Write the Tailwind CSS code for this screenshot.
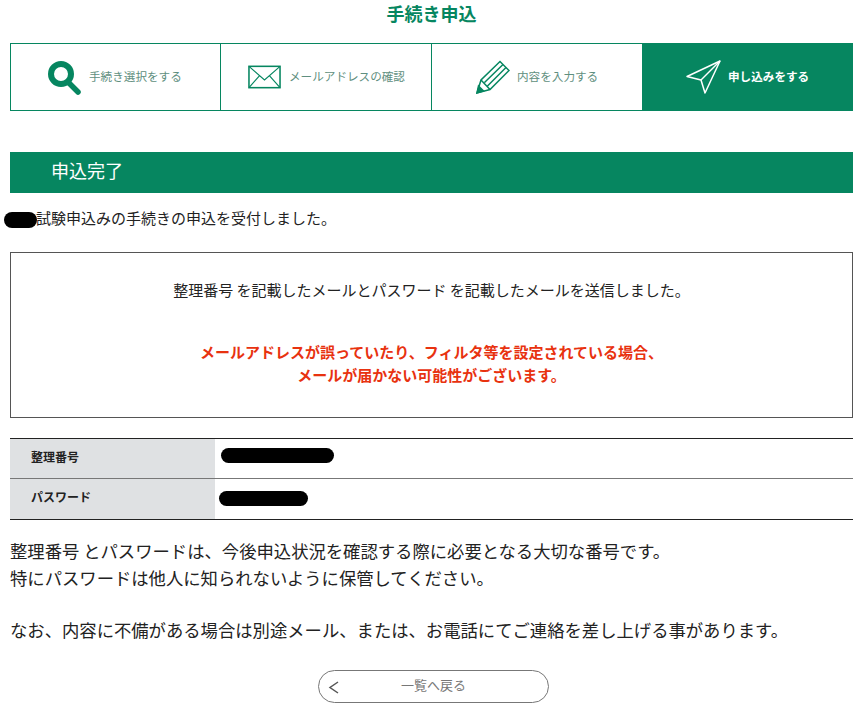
<!DOCTYPE html>
<html lang="ja">
<head>
  <meta charset="UTF-8" />
  <title>手続き申込</title>
  <script src="https://cdn.jsdelivr.net/npm/@tailwindcss/browser@4"></script>
</head>
<body class="bg-white font-['Noto_Sans_CJK_JP',sans-serif] text-[#222] overflow-hidden">
  <div class="w-[858px] h-[710px] pl-[10px] pr-[5px]">
    <h1 class="h-[43px] text-center text-[18px] leading-[26px] font-bold text-[#068660]">手続き申込</h1>

    <!-- steps -->
    <ol class="flex h-[68px] border border-[#068660]">
      <li class="w-[210px] flex items-center border-r border-[#068660] pl-[36px]">
        <svg class="w-[35px] h-[35px] mr-[7px]" viewBox="0 0 35 35" fill="none" stroke="#068660">
          <circle cx="14" cy="14" r="10" stroke-width="6"/>
          <path d="M22 23 L31 32" stroke-width="5.5" stroke-linecap="round"/>
        </svg>
        <span class="text-[11.6px] text-[#5f8f80]">手続き選択をする</span>
      </li>
      <li class="w-[211px] flex items-center border-r border-[#068660] pl-[27px]">
        <svg class="w-[33px] h-[24px] mr-[8px]" viewBox="0 0 34 24" fill="none" stroke="#068660">
          <rect x="1" y="1" width="32" height="22" stroke-width="1.6"/>
          <path d="M1 1 L17 15 L33 1 M1 23 L12 10.5 M33 23 L22 10.5" stroke-width="1.2"/>
        </svg>
        <span class="text-[11.6px] text-[#5f8f80]">メールアドレスの確認</span>
      </li>
      <li class="w-[210px] flex items-center pl-[43px]">
        <svg class="w-[35px] h-[35px] mr-[7px]" viewBox="0 0 35 35" fill="none" stroke="#068660" stroke-width="1.5">
          <path d="M2 33 L6 20 L25 1.5 L34 10.5 L15 29.5 Z"/>
          <path d="M6 20 L15 29.5 M9.5 22.5 L28 4.5 M12.5 26 L31 7.5"/>
          <path d="M2 33 L3.5 26 L8.5 31 Z" fill="#068660"/>
        </svg>
        <span class="text-[11.6px] text-[#5f8f80]">内容を入力する</span>
      </li>
      <li class="flex-1 flex items-center bg-[#068660] pl-[44px]">
        <svg class="w-[35px] h-[35px] mr-[7px]" viewBox="0 0 35 35" fill="none" stroke="#fff" stroke-width="1.5" stroke-linejoin="round">
          <path d="M1 16.5 L34 1 L19 33 L15 20 Z"/>
          <path d="M15 20 L34 1"/>
        </svg>
        <span class="text-[11.6px] font-bold text-white">申し込みをする</span>
      </li>
    </ol>

    <h2 class="mt-[41px] h-[41px] bg-[#068660] pl-[41px] text-[18px] leading-[37px] text-white">申込完了</h2>

    <div class="relative mt-[13px] h-[37px] pl-[26px] text-[15px] leading-[24px]">
      <span class="absolute left-[-6px] top-[6px] w-[33px] h-[16px] rounded-full bg-black"></span>
      試験申込みの手続きの申込を受付しました。
    </div>

    <div class="mt-[9px] h-[166px] border border-[#555] pt-[25px] text-center text-[15px]">
      <p class="leading-[24px]">整理番号 を記載したメールとパスワード を記載したメールを送信しました。</p>
      <p class="mt-[38px] font-bold text-[#e8320f] leading-[23px]">メールアドレスが誤っていたり、フィルタ等を設定されている場合、<br />メールが届かない可能性がございます。</p>
    </div>

    <!-- number table -->
    <dl class="mt-[20px] border-y border-[#222] text-[12px]">
      <div class="flex h-[40px] border-b border-[#777]">
        <dt class="w-[205px] bg-[#dfe1e3] pl-[21px] font-bold leading-[35px]">整理番号</dt>
        <dd class="flex-1 relative"><span class="absolute left-[6px] top-[9px] w-[113px] h-[15px] rounded-full bg-black"></span></dd>
      </div>
      <div class="flex h-[40px]">
        <dt class="w-[205px] bg-[#dfe1e3] pl-[21px] font-bold leading-[35px]">パスワード</dt>
        <dd class="flex-1 relative"><span class="absolute left-[4px] top-[12px] w-[89px] h-[15px] rounded-full bg-black"></span></dd>
      </div>
    </dl>

    <div class="mt-[17px] text-[17.33px] leading-[27px]">
      <p>整理番号 とパスワードは、今後申込状況を確認する際に必要となる大切な番号です。</p>
      <p>特にパスワードは他人に知られないように保管してください。</p>
      <p class="mt-[25px]">なお、内容に不備がある場合は別途メール、または、お電話にてご連絡を差し上げる事があります。</p>
    </div>

    <div class="mt-[27px] flex justify-center pl-[4px]">
      <a class="relative w-[231px] h-[33px] rounded-full border border-[#777] text-center text-[13px] leading-[28px] text-[#777]">
        <svg class="absolute left-[9px] top-[10px] w-[11px] h-[13px]" viewBox="0 0 11 13" fill="none" stroke="#555" stroke-width="1.5"><path d="M10 1 L2 6.5 L10 12"/></svg>
        一覧へ戻る
      </a>
    </div>
  </div>
</body>
</html>
